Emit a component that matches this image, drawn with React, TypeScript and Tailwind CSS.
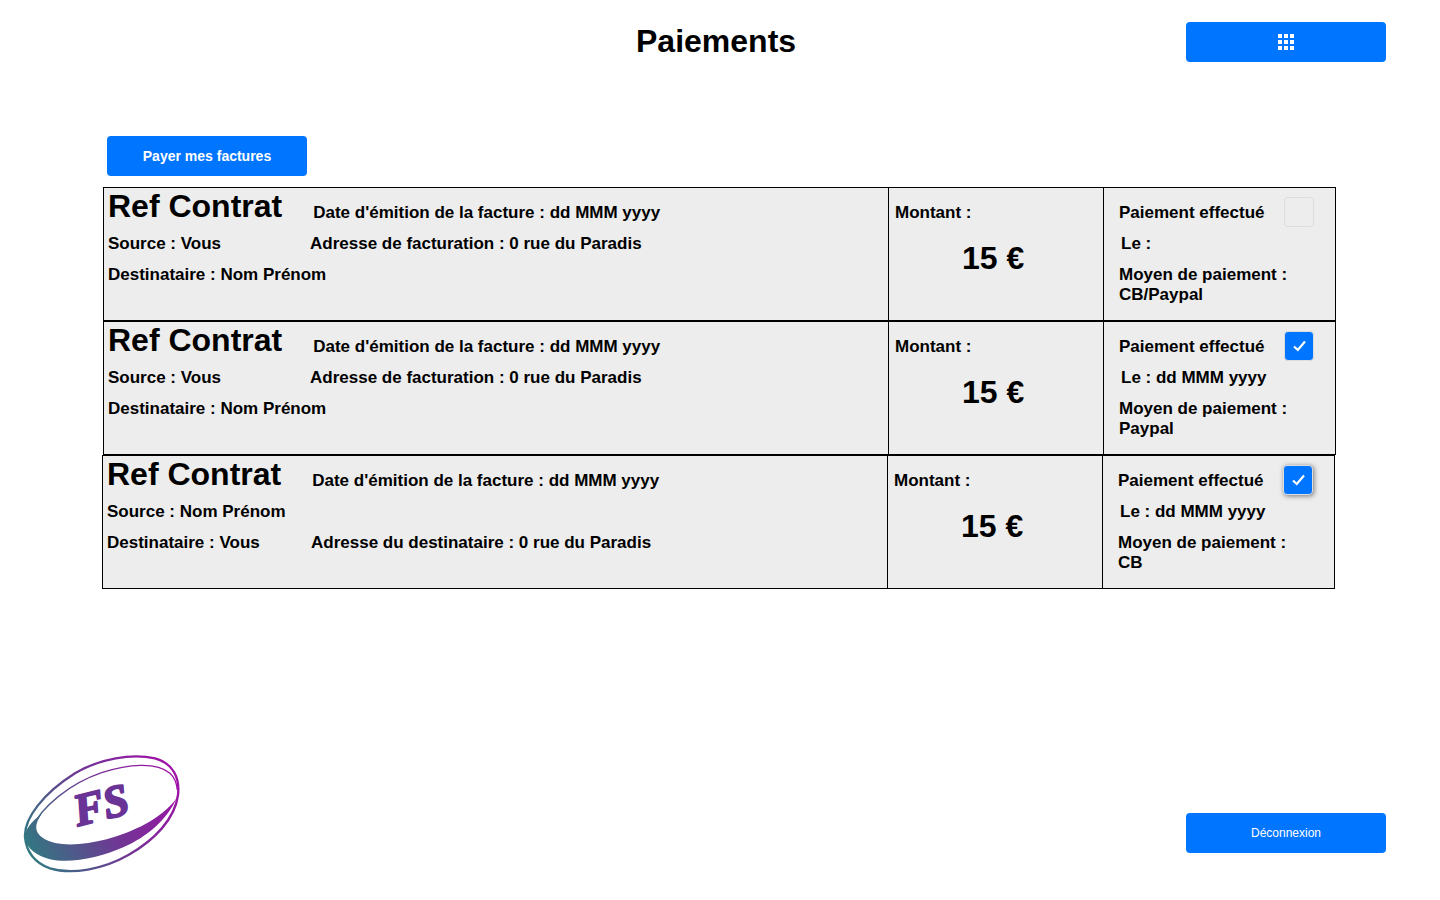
const invoices = [
  {
    source: "Source : Vous",
    sourceAddress: "Adresse de facturation : 0 rue du Paradis",
    recipient: "Destinataire : Nom Prénom",
    recipientAddress: "",
    paid: false,
    focused: false,
    date: "Le :",
    method: "CB/Paypal",
  },
  {
    source: "Source : Vous",
    sourceAddress: "Adresse de facturation : 0 rue du Paradis",
    recipient: "Destinataire : Nom Prénom",
    recipientAddress: "",
    paid: true,
    focused: false,
    date: "Le : dd MMM yyyy",
    method: "Paypal",
  },
  {
    source: "Source : Nom Prénom",
    sourceAddress: "",
    recipient: "Destinataire : Vous",
    recipientAddress: "Adresse du destinataire : 0 rue du Paradis",
    paid: true,
    focused: true,
    date: "Le : dd MMM yyyy",
    method: "CB",
  },
];

function GridIcon() {
  return (
    <svg width="16" height="16" viewBox="0 0 16 16" fill="#fff">
      <rect x="0" y="0" width="4" height="4" />
      <rect x="6" y="0" width="4" height="4" />
      <rect x="12" y="0" width="4" height="4" />
      <rect x="0" y="6" width="4" height="4" />
      <rect x="6" y="6" width="4" height="4" />
      <rect x="12" y="6" width="4" height="4" />
      <rect x="0" y="12" width="4" height="4" />
      <rect x="6" y="12" width="4" height="4" />
      <rect x="12" y="12" width="4" height="4" />
    </svg>
  );
}

function Logo() {
  return (
    <svg width="200" height="150" viewBox="0 0 600 450">
      <defs>
        <linearGradient id="fs" gradientUnits="userSpaceOnUse" x1="80" y1="340" x2="530" y2="100">
          <stop offset="0" stopColor="#2f7b80" />
          <stop offset="0.5" stopColor="#6f3794" />
          <stop offset="1" stopColor="#a00fa8" />
        </linearGradient>
      </defs>
      {/* outer ring */}
      <path
        d="M75 290C72 235 130 160 225 100C300 55 395 40 465 55C520 70 540 115 534 165C525 235 465 300 385 345C310 388 215 405 150 385C105 370 78 335 75 290Z"
        fill="none"
        stroke="url(#fs)"
        strokeWidth="7"
      />
      {/* inner thin arc */}
      <path
        d="M95 265C125 200 210 130 305 98C385 72 470 65 510 100C524 113 530 130 532 150"
        fill="none"
        stroke="url(#fs)"
        strokeWidth="4"
      />
      {/* swoosh */}
      <path
        d="M530 175C480 240 400 275 320 298C250 316 170 322 130 295C100 275 105 250 125 222C95 245 72 270 74 295C80 325 110 348 150 358C215 372 300 352 370 322C440 292 500 240 530 175Z"
        fill="url(#fs)"
      />
      <text
        x="303"
        y="240"
        textAnchor="middle"
        transform="rotate(-14 303 195)"
        fill="#6a3396"
        stroke="#6a3396"
        strokeWidth="6"
        strokeLinejoin="round"
        fontFamily="'Liberation Serif', serif"
        fontWeight="700"
        fontStyle="italic"
        fontSize="136"
      >
        FS
      </text>
    </svg>
  );
}

function Checkbox({ checked, focused }: { checked: boolean; focused: boolean }) {
  if (!checked) {
    return <div className="w-[30px] h-[30px] rounded-[4px] border border-[#dddddd] bg-[#ededed]" />;
  }
  return (
    <div
      className={`w-[30px] h-[30px] rounded-[4px] border border-[#dddddd] bg-[#0075ff] flex items-center justify-center ${
        focused ? "shadow-[1px_1px_5px_rgba(0,0,0,0.5)]" : ""
      }`}
    >
      <svg width="13" height="12" viewBox="0 0 13 12" fill="none" stroke="#fff" strokeWidth="2.2">
        <path d="M1 6.5L4.8 10L12 1.5" />
      </svg>
    </div>
  );
}

function InvoiceRow({ invoice, className }: { invoice: (typeof invoices)[number]; className: string }) {
  const offset = invoice.recipientAddress ? "w-[204px]" : "w-[202px]";
  return (
    <div className={`flex w-[1233px] h-[134px] border border-black bg-[#ededed] text-[17px] leading-[20px] font-bold ${className}`}>
      <div className="w-[785px] border-r border-black pl-[4px]">
        <div className="flex items-start">
          <div className="text-[32px] leading-[36px] whitespace-nowrap">Ref Contrat</div>
          <div className="ml-[31px] mt-[15px] whitespace-nowrap">Date d'émition de la facture : dd MMM yyyy</div>
        </div>
        <div className="flex mt-[10px]">
          <div className={`${offset} whitespace-nowrap`}>{invoice.source}</div>
          <div className="whitespace-nowrap">{invoice.sourceAddress}</div>
        </div>
        <div className="flex mt-[11px]">
          <div className={`${offset} whitespace-nowrap`}>{invoice.recipient}</div>
          <div className="whitespace-nowrap">{invoice.recipientAddress}</div>
        </div>
      </div>
      <div className="w-[215px] border-r border-black pl-[6px] pt-[15px]">
        <div>Montant :</div>
        <div className="mt-[17px] ml-[67px] text-[32px] leading-[36px]">15 €</div>
      </div>
      <div className="flex-1 pl-[15px] pt-[9px]">
        <div className="flex items-center h-[30px]">
          <div className="w-[165px] mt-[2px]">Paiement effectué</div>
          <Checkbox checked={invoice.paid} focused={invoice.focused} />
        </div>
        <div className="mt-[7px] ml-[2px]">{invoice.date}</div>
        <div className="mt-[11px]">
          Moyen de paiement :
          <br />
          {invoice.method}
        </div>
      </div>
    </div>
  );
}

export default function App() {
  return (
    <div className="w-[1440px] h-[900px] overflow-hidden bg-white text-black font-['Liberation_Sans',Arial,sans-serif]">
      <header className="flex items-center h-[40px] mt-[22px]">
        <h1 className="ml-[636px] text-[32px] leading-[40px] font-bold -translate-y-[1px]">Paiements</h1>
        <button className="ml-auto mr-[54px] w-[200px] h-[40px] rounded-[4px] bg-[#0075ff] flex items-center justify-center">
          <GridIcon />
        </button>
      </header>

      <button className="block mt-[74px] ml-[107px] w-[200px] h-[40px] rounded-[4px] bg-[#0075ff] text-white text-[14px] font-bold">
        Payer mes factures
      </button>

      <div className="mt-[11px] ml-[103px]">
        {invoices.map((invoice, i) => (
          <InvoiceRow key={i} invoice={invoice} className={i === 2 ? "-ml-px" : ""} />
        ))}
      </div>

      <footer className="flex items-start mt-[151px]">
        <Logo />
        <button className="ml-[986px] mt-[73px] w-[200px] h-[40px] rounded-[4px] bg-[#0075ff] text-white text-[12px]">
          Déconnexion
        </button>
      </footer>
    </div>
  );
}
